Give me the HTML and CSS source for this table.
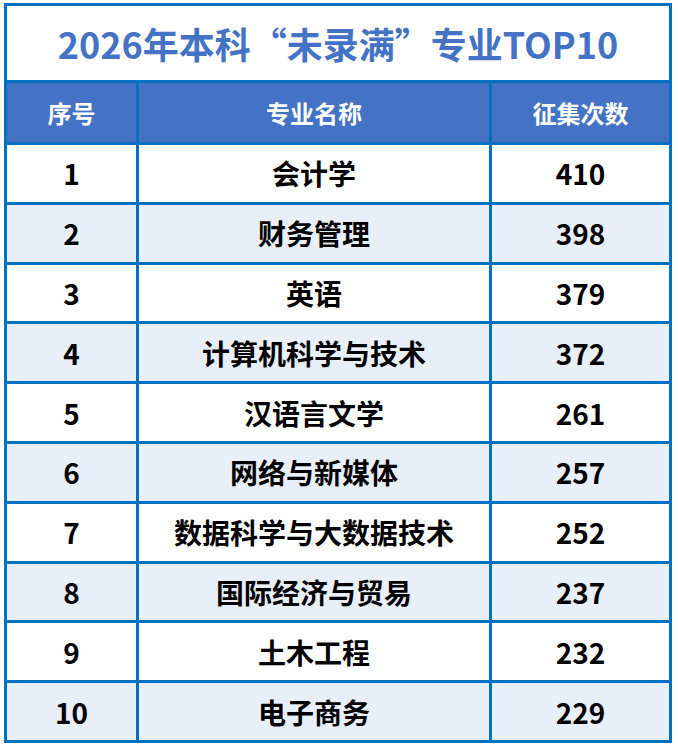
FILE: index.html
```html
<!DOCTYPE html>
<html lang="zh-CN">
<head>
<meta charset="utf-8">
<title>2026年本科“未录满”专业TOP10</title>
<link rel="stylesheet" href="styles.css">
</head>
<body>
<div class="sheet">
  <div class="title">2026年本科“未录满”专业TOP10</div>
  <div class="hd">序号</div><div class="hd">专业名称</div><div class="hd">征集次数</div>
  <div class="c">1</div><div class="c">会计学</div><div class="c">410</div>
  <div class="c alt">2</div><div class="c alt">财务管理</div><div class="c alt">398</div>
  <div class="c">3</div><div class="c">英语</div><div class="c">379</div>
  <div class="c alt">4</div><div class="c alt">计算机科学与技术</div><div class="c alt">372</div>
  <div class="c">5</div><div class="c">汉语言文学</div><div class="c">261</div>
  <div class="c alt">6</div><div class="c alt">网络与新媒体</div><div class="c alt">257</div>
  <div class="c">7</div><div class="c">数据科学与大数据技术</div><div class="c">252</div>
  <div class="c alt">8</div><div class="c alt">国际经济与贸易</div><div class="c alt">237</div>
  <div class="c">9</div><div class="c">土木工程</div><div class="c">232</div>
  <div class="c alt">10</div><div class="c alt">电子商务</div><div class="c alt">229</div>
</div>
</body>
</html>
```
FILE: styles.css
```css
html, body {
  margin: 0;
  padding: 0;
  background: #ffffff;
}
body {
  padding: 3px 0 0 4px;
  font-family: "Noto Sans CJK SC", "Noto Sans", sans-serif;
}
.sheet {
  width: 662px;
  display: grid;
  grid-template-columns: 129px 350px 177px;
  grid-template-rows: 74px 59px repeat(10, 56.8px);
  gap: 3px;
  padding: 3px;
  background: #0070c0;
}
.title {
  grid-column: 1 / 4;
  background: #ffffff;
  color: #4472c4;
  font-size: 36px;
  font-weight: 700;
  display: flex;
  align-items: center;
  justify-content: center;
  letter-spacing: 0;
}
.hd {
  background: #4472c4;
  color: #ffffff;
  font-size: 24px;
  font-weight: 700;
  display: flex;
  align-items: center;
  justify-content: center;
}
.c {
  background: #ffffff;
  color: #000000;
  font-size: 28px;
  font-weight: 700;
  display: flex;
  align-items: center;
  justify-content: center;
}
.c.alt {
  background: #e9eff9;
}
```
